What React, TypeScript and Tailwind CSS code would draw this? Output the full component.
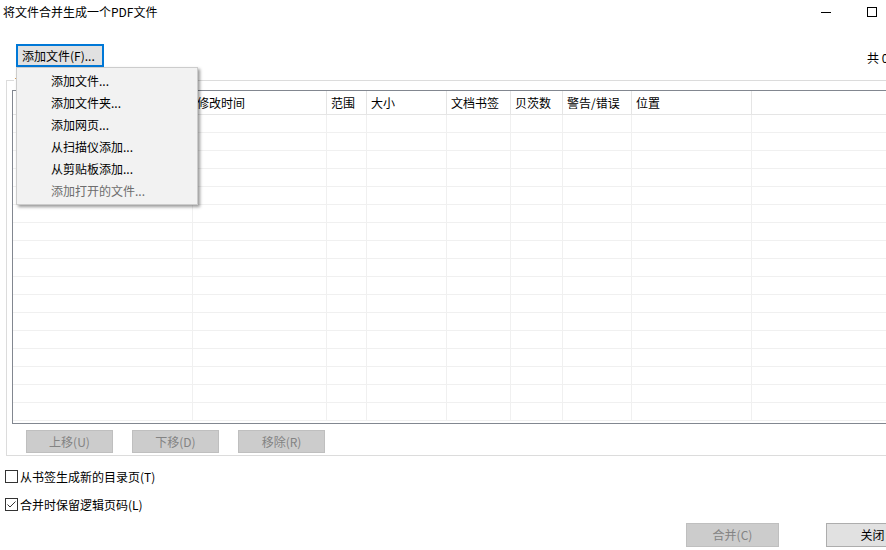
import React from "react";

const cols = [180, 134, 40, 80, 64, 52, 69, 120, 220];
const heads = ["名称", "修改时间", "范围", "大小", "文档书签", "贝茨数", "警告/错误", "位置", ""];
const rows = Array.from({ length: 17 });

const menuItems = [
  { t: "添加文件...", d: false },
  { t: "添加文件夹...", d: false },
  { t: "添加网页...", d: false },
  { t: "从扫描仪添加...", d: false },
  { t: "从剪贴板添加...", d: false },
  { t: "添加打开的文件...", d: true },
];

function DisabledBtn({ label, w, h }: { label: string; w: string; h: string }) {
  return (
    <div
      className={`${w} ${h} flex items-center justify-center bg-[#cccccc] border border-[#bfbfbf] text-[#838383] text-[12px] leading-none`}
    >
      {label}
    </div>
  );
}

export default function App() {
  return (
    <div className="w-[886px] h-[550px] overflow-hidden bg-white relative font-['Noto_Sans_CJK_SC',sans-serif] text-black text-[12px]">
      <div className="w-[941px]">
        {/* title bar */}
        <div className="h-[26px] flex items-center">
          <div className="pl-[3px] flex-1 leading-none -mt-[2px]">将文件合并生成一个PDF文件</div>
          <div className="w-[46px] h-[26px] flex items-center justify-center">
            <div className="w-[10px] h-px bg-black -mt-[2px]" />
          </div>
          <div className="w-[46px] h-[26px] flex items-center justify-center">
            <div className="w-[10px] h-[10px] border border-black -mt-[2px] -ml-[1px]" />
          </div>
          <div className="w-[46px] h-[26px] flex items-center justify-center">
            <svg width="10" height="10" viewBox="0 0 10 10">
              <path d="M0 0L10 10M10 0L0 10" stroke="#000" strokeWidth="1" />
            </svg>
          </div>
        </div>

        {/* add button row */}
        <div className="mt-[18px] pl-[16px] pr-[14px] flex items-end justify-between">
          <div className="w-[88px] h-[23px] border-2 border-[#0078d7] bg-[#e1e1e1] flex items-center pl-[4px] leading-none">
            添加文件(F)...
          </div>
          <div className="leading-[16px] mb-[1px]">共 0 个文件</div>
        </div>

        {/* group box */}
        <div className="mx-[6px] mt-[13px] border border-[#dcdcdc] relative pt-[9px] px-[5px] pb-[2px]">
          <div className="absolute left-[7px] -top-[9px] bg-white px-[1px] leading-[16px]">请</div>
          {/* list view */}
          <div className="h-[334px] border border-[#828790] overflow-hidden">
            <div className="flex h-[24px] border-b border-[#e5e5e5]">
              {cols.map((w, i) => (
                <div
                  key={i}
                  style={{ width: w }}
                  className="shrink-0 border-r border-[#e5e5e5] flex items-center pl-[4px] pt-[1px] leading-none whitespace-nowrap"
                >
                  {heads[i]}
                </div>
              ))}
            </div>
            {rows.map((_, r) => (
              <div key={r} className="flex h-[18px] border-b border-[#f0f0f0]">
                {cols.map((w, i) => (
                  <div key={i} style={{ width: w }} className="shrink-0 border-r border-[#f0f0f0]" />
                ))}
              </div>
            ))}
          </div>
          <div className="mt-[6px] ml-[14px] flex gap-[19px]">
            <DisabledBtn label="上移(U)" w="w-[87px]" h="h-[23px]" />
            <DisabledBtn label="下移(D)" w="w-[87px]" h="h-[23px]" />
            <DisabledBtn label="移除(R)" w="w-[87px]" h="h-[23px]" />
          </div>
        </div>

        {/* checkboxes */}
        <div className="mt-[14px] pl-[5px] flex flex-col gap-[15px]">
          <div className="h-[13px] flex items-center">
            <div className="w-[13px] h-[13px] border border-[#333333] bg-white shrink-0" />
            <span className="ml-[2px] leading-none">从书签生成新的目录页(T)</span>
          </div>
          <div className="h-[13px] flex items-center">
            <div className="w-[13px] h-[13px] border border-[#333333] bg-white shrink-0 flex items-center justify-center">
              <svg width="11" height="11" viewBox="0 0 11 11">
                <polyline points="1.5,5.5 4,8 9.5,2.5" fill="none" stroke="#333" strokeWidth="1" />
              </svg>
            </div>
            <span className="ml-[2px] leading-none">合并时保留逻辑页码(L)</span>
          </div>
        </div>

        {/* bottom buttons */}
        <div className="mt-[12px] pr-[22px] flex justify-end gap-[47px]">
          <DisabledBtn label="合并(C)" w="w-[93px]" h="h-[24px]" />
          <div className="w-[93px] h-[24px] bg-[#e1e1e1] border border-[#adadad] flex items-center justify-center leading-none">
            关闭
          </div>
        </div>
      </div>

      {/* dropdown menu */}
      <div className="absolute left-[16px] top-[67px] w-[182px] bg-[#f2f2f2] border border-[#cccccc] shadow-[2px_2px_3px_rgba(0,0,0,0.4)] py-[2px]">
        {menuItems.map((m) => (
          <div
            key={m.t}
            className={`h-[22px] flex items-center pl-[34px] leading-none ${m.d ? "text-[#6d6d6d]" : "text-black"}`}
          >
            {m.t}
          </div>
        ))}
      </div>
    </div>
  );
}
